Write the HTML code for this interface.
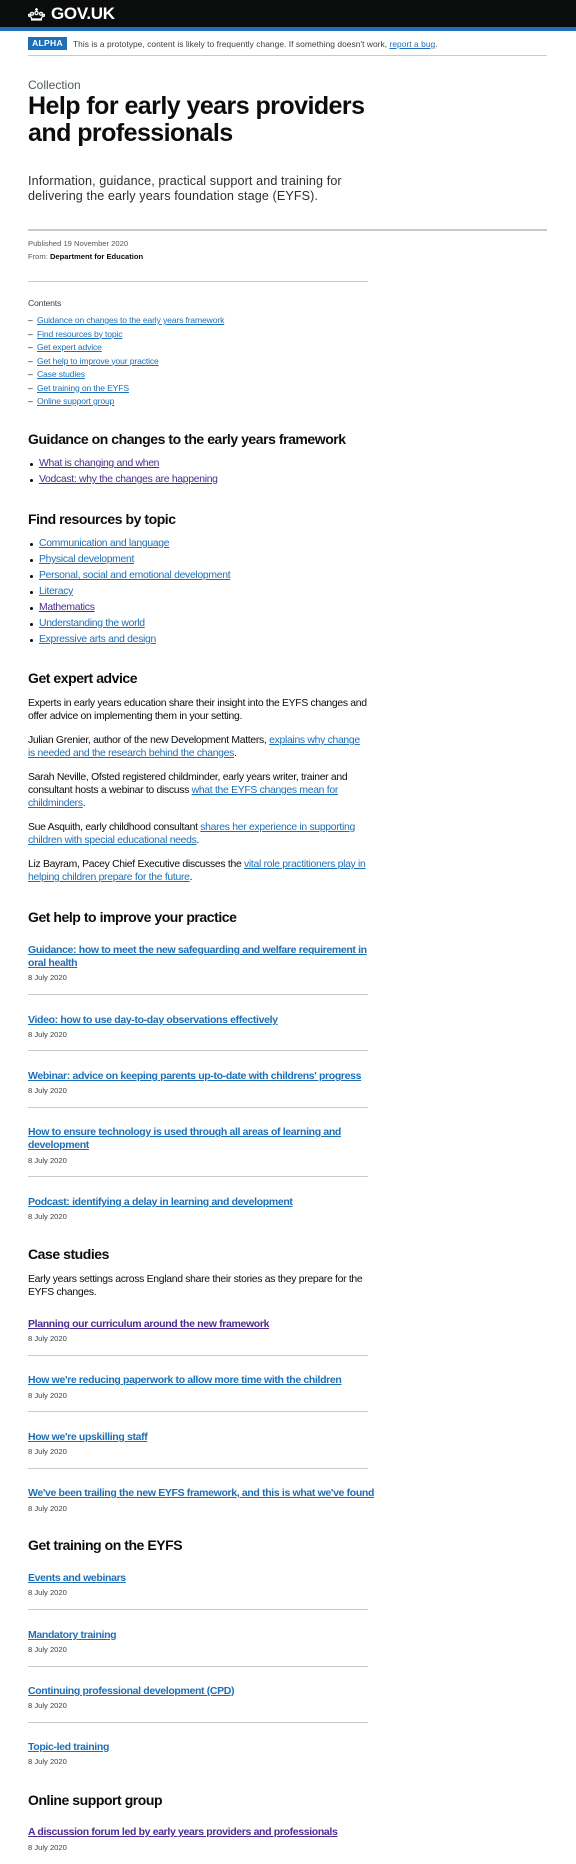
<!DOCTYPE html>
<html><head><meta charset="utf-8">
<style>
*{margin:0;padding:0;box-sizing:border-box}
body{width:576px;height:1864px;position:relative;background:#fff;font-family:"Liberation Sans",Arial,sans-serif;color:#0b0c0c;overflow:hidden}
.a{position:absolute;left:28px;white-space:nowrap}
a{color:#1d70b8;text-decoration:underline;text-decoration-thickness:1px;text-underline-offset:1px}
a.v{color:#4c2c92}
.hr{position:absolute;left:28px;width:340px;height:1px;background:#c8cacb}
.p{font-size:10.4px;line-height:13px;letter-spacing:-0.3px}
.h2{font-size:14px;font-weight:bold;line-height:18px;letter-spacing:-0.45px}
.lk{font-size:10.5px;font-weight:bold;line-height:13px;letter-spacing:-0.35px}
.dt{font-size:7.6px;line-height:10px;color:#383f43}
.ul{font-size:10.4px;line-height:16px;letter-spacing:-0.3px}
.ul div{position:relative;padding-left:11px}
.ul div:before{content:"";position:absolute;left:2px;top:7px;width:3px;height:3px;border-radius:50%;background:#0b0c0c}
.ct{font-size:8.6px;line-height:13.5px;letter-spacing:-0.15px}
.ct div{position:relative;padding-left:9px}
.ct div:before{content:"–";position:absolute;left:0;color:#0b0c0c}
</style></head><body>
<div style="position:absolute;left:0;top:0;width:576px;height:27px;background:#0b0c0c"></div>
<div style="position:absolute;left:0;top:27px;width:576px;height:4px;background:#1d70b8"></div>
<svg style="position:absolute;left:28px;top:7px" width="17" height="14" viewBox="0 0 17 14"><g fill="none" stroke="#fff" stroke-width="1.3"><path d="M8.5 1v3M7 2.5h3"/><circle cx="8.5" cy="6" r="1.6"/><circle cx="4" cy="6.8" r="1.4"/><circle cx="13" cy="6.8" r="1.4"/><circle cx="1.4" cy="8.3" r="1"/><circle cx="15.6" cy="8.3" r="1"/><path d="M2.5 9.5l1.5 2.5h9l1.5-2.5"/></g><rect x="3" y="12" width="11" height="1.6" fill="#fff"/></svg>
<div class="a" style="left:51px;top:3px;font-size:17px;line-height:22px;font-weight:bold;color:#fff;letter-spacing:-0.3px">GOV.UK</div>
<div class="a" style="top:37px;width:39px;height:13px;background:#1d70b8;color:#fff;font-size:8.5px;font-weight:bold;line-height:13px;text-align:center;letter-spacing:0.3px">ALPHA</div>
<div class="a" style="left:73px;top:38px;font-size:8.4px;line-height:12px;letter-spacing:0.05px;color:#383f43">This is a prototype, content is likely to frequently change. If something doesn't work, <a href="#">report a bug</a>.</div>
<div class="hr" style="top:55px;width:519px"></div>
<div class="a" style="top:77px;font-size:12px;line-height:16px;color:#505a5f">Collection</div>
<div class="a" style="top:93px;font-size:25px;font-weight:bold;line-height:27px;letter-spacing:-0.55px">Help for early years providers<br>and professionals</div>
<div class="a" style="top:174px;font-size:12.6px;line-height:15px;letter-spacing:0.1px;color:#2b3033">Information, guidance, practical support and training for<br>delivering the early years foundation stage (EYFS).</div>
<div class="hr" style="top:229px;width:519px;height:2px"></div>
<div class="a" style="top:239px;font-size:7.6px;line-height:10px;color:#505a5f">Published 19 November 2020</div>
<div class="a" style="top:252px;font-size:7.6px;line-height:10px;color:#505a5f">From: <b style="color:#0b0c0c">Department for Education</b></div>
<div class="hr" style="top:281px"></div>
<div class="a ct" style="top:297px;color:#383f43">Contents</div>
<div class="a ct" style="top:314px">
<div><a href="#">Guidance on changes to the early years framework</a></div>
<div><a href="#">Find resources by topic</a></div>
<div><a href="#">Get expert advice</a></div>
<div><a href="#">Get help to improve your practice</a></div>
<div><a href="#">Case studies</a></div>
<div><a href="#">Get training on the EYFS</a></div>
<div><a href="#">Online support group</a></div>
</div>
<div class="a h2" style="top:430px">Guidance on changes to the early years framework</div>
<div class="a ul" style="top:456px">
<div><a class="v" href="#">What is changing and when</a></div>
<div><a class="v" href="#">Vodcast: why the changes are happening</a></div>
</div>
<div class="a h2" style="top:510px">Find resources by topic</div>
<div class="a ul" style="top:536px">
<div><a href="#">Communication and language</a></div>
<div><a href="#">Physical development</a></div>
<div><a href="#">Personal, social and emotional development</a></div>
<div><a href="#">Literacy</a></div>
<div><a class="v" href="#">Mathematics</a></div>
<div><a href="#">Understanding the world</a></div>
<div><a href="#">Expressive arts and design</a></div>
</div>
<div class="a h2" style="top:669px">Get expert advice</div>
<div class="a p" style="top:697px">Experts in early years education share their insight into the EYFS changes and<br>offer advice on implementing them in your setting.</div>
<div class="a p" style="top:734px">Julian Grenier, author of the new Development Matters, <a href="#">explains why change<br>is needed and the research behind the changes</a>.</div>
<div class="a p" style="top:771px">Sarah Neville, Ofsted registered childminder, early years writer, trainer and<br>consultant hosts a webinar to discuss <a href="#">what the EYFS changes mean for<br>childminders</a>.</div>
<div class="a p" style="top:821px">Sue Asquith, early childhood consultant <a href="#">shares her experience in supporting<br>children with special educational needs</a>.</div>
<div class="a p" style="top:858px">Liz Bayram, Pacey Chief Executive discusses the <a href="#">vital role practitioners play in<br>helping children prepare for the future</a>.</div>
<div class="a h2" style="top:908px">Get help to improve your practice</div>
<div class="a lk" style="top:944px"><a href="#">Guidance: how to meet the new safeguarding and welfare requirement in<br>oral health</a></div>
<div class="a dt" style="top:973px">8 July 2020</div>
<div class="hr" style="top:994px"></div>
<div class="a lk" style="top:1014px"><a href="#">Video: how to use day-to-day observations effectively</a></div>
<div class="a dt" style="top:1030px">8 July 2020</div>
<div class="hr" style="top:1050px"></div>
<div class="a lk" style="top:1070px"><a href="#">Webinar: advice on keeping parents up-to-date with childrens' progress</a></div>
<div class="a dt" style="top:1086px">8 July 2020</div>
<div class="hr" style="top:1107px"></div>
<div class="a lk" style="top:1126px"><a href="#">How to ensure technology is used through all areas of learning and<br>development</a></div>
<div class="a dt" style="top:1156px">8 July 2020</div>
<div class="hr" style="top:1176px"></div>
<div class="a lk" style="top:1196px"><a href="#">Podcast: identifying a delay in learning and development</a></div>
<div class="a dt" style="top:1212px">8 July 2020</div>
<div class="a h2" style="top:1245px">Case studies</div>
<div class="a p" style="top:1273px">Early years settings across England share their stories as they prepare for the<br>EYFS changes.</div>
<div class="a lk" style="top:1318px"><a class="v" href="#">Planning our curriculum around the new framework</a></div>
<div class="a dt" style="top:1334px">8 July 2020</div>
<div class="hr" style="top:1355px"></div>
<div class="a lk" style="top:1374px"><a href="#">How we're reducing paperwork to allow more time with the children</a></div>
<div class="a dt" style="top:1391px">8 July 2020</div>
<div class="hr" style="top:1411px"></div>
<div class="a lk" style="top:1431px"><a href="#">How we're upskilling staff</a></div>
<div class="a dt" style="top:1447px">8 July 2020</div>
<div class="hr" style="top:1468px"></div>
<div class="a lk" style="top:1487px"><a href="#">We've been trailing the new EYFS framework, and this is what we've found</a></div>
<div class="a dt" style="top:1504px">8 July 2020</div>
<div class="a h2" style="top:1536px">Get training on the EYFS</div>
<div class="a lk" style="top:1572px"><a href="#">Events and webinars</a></div>
<div class="a dt" style="top:1588px">8 July 2020</div>
<div class="hr" style="top:1609px"></div>
<div class="a lk" style="top:1629px"><a href="#">Mandatory training</a></div>
<div class="a dt" style="top:1645px">8 July 2020</div>
<div class="hr" style="top:1666px"></div>
<div class="a lk" style="top:1685px"><a href="#">Continuing professional development (CPD)</a></div>
<div class="a dt" style="top:1701px">8 July 2020</div>
<div class="hr" style="top:1722px"></div>
<div class="a lk" style="top:1741px"><a href="#">Topic-led training</a></div>
<div class="a dt" style="top:1757px">8 July 2020</div>
<div class="a h2" style="top:1791px">Online support group</div>
<div class="a lk" style="top:1826px"><a class="v" href="#">A discussion forum led by early years providers and professionals</a></div>
<div class="a dt" style="top:1843px">8 July 2020</div>
</body></html>
